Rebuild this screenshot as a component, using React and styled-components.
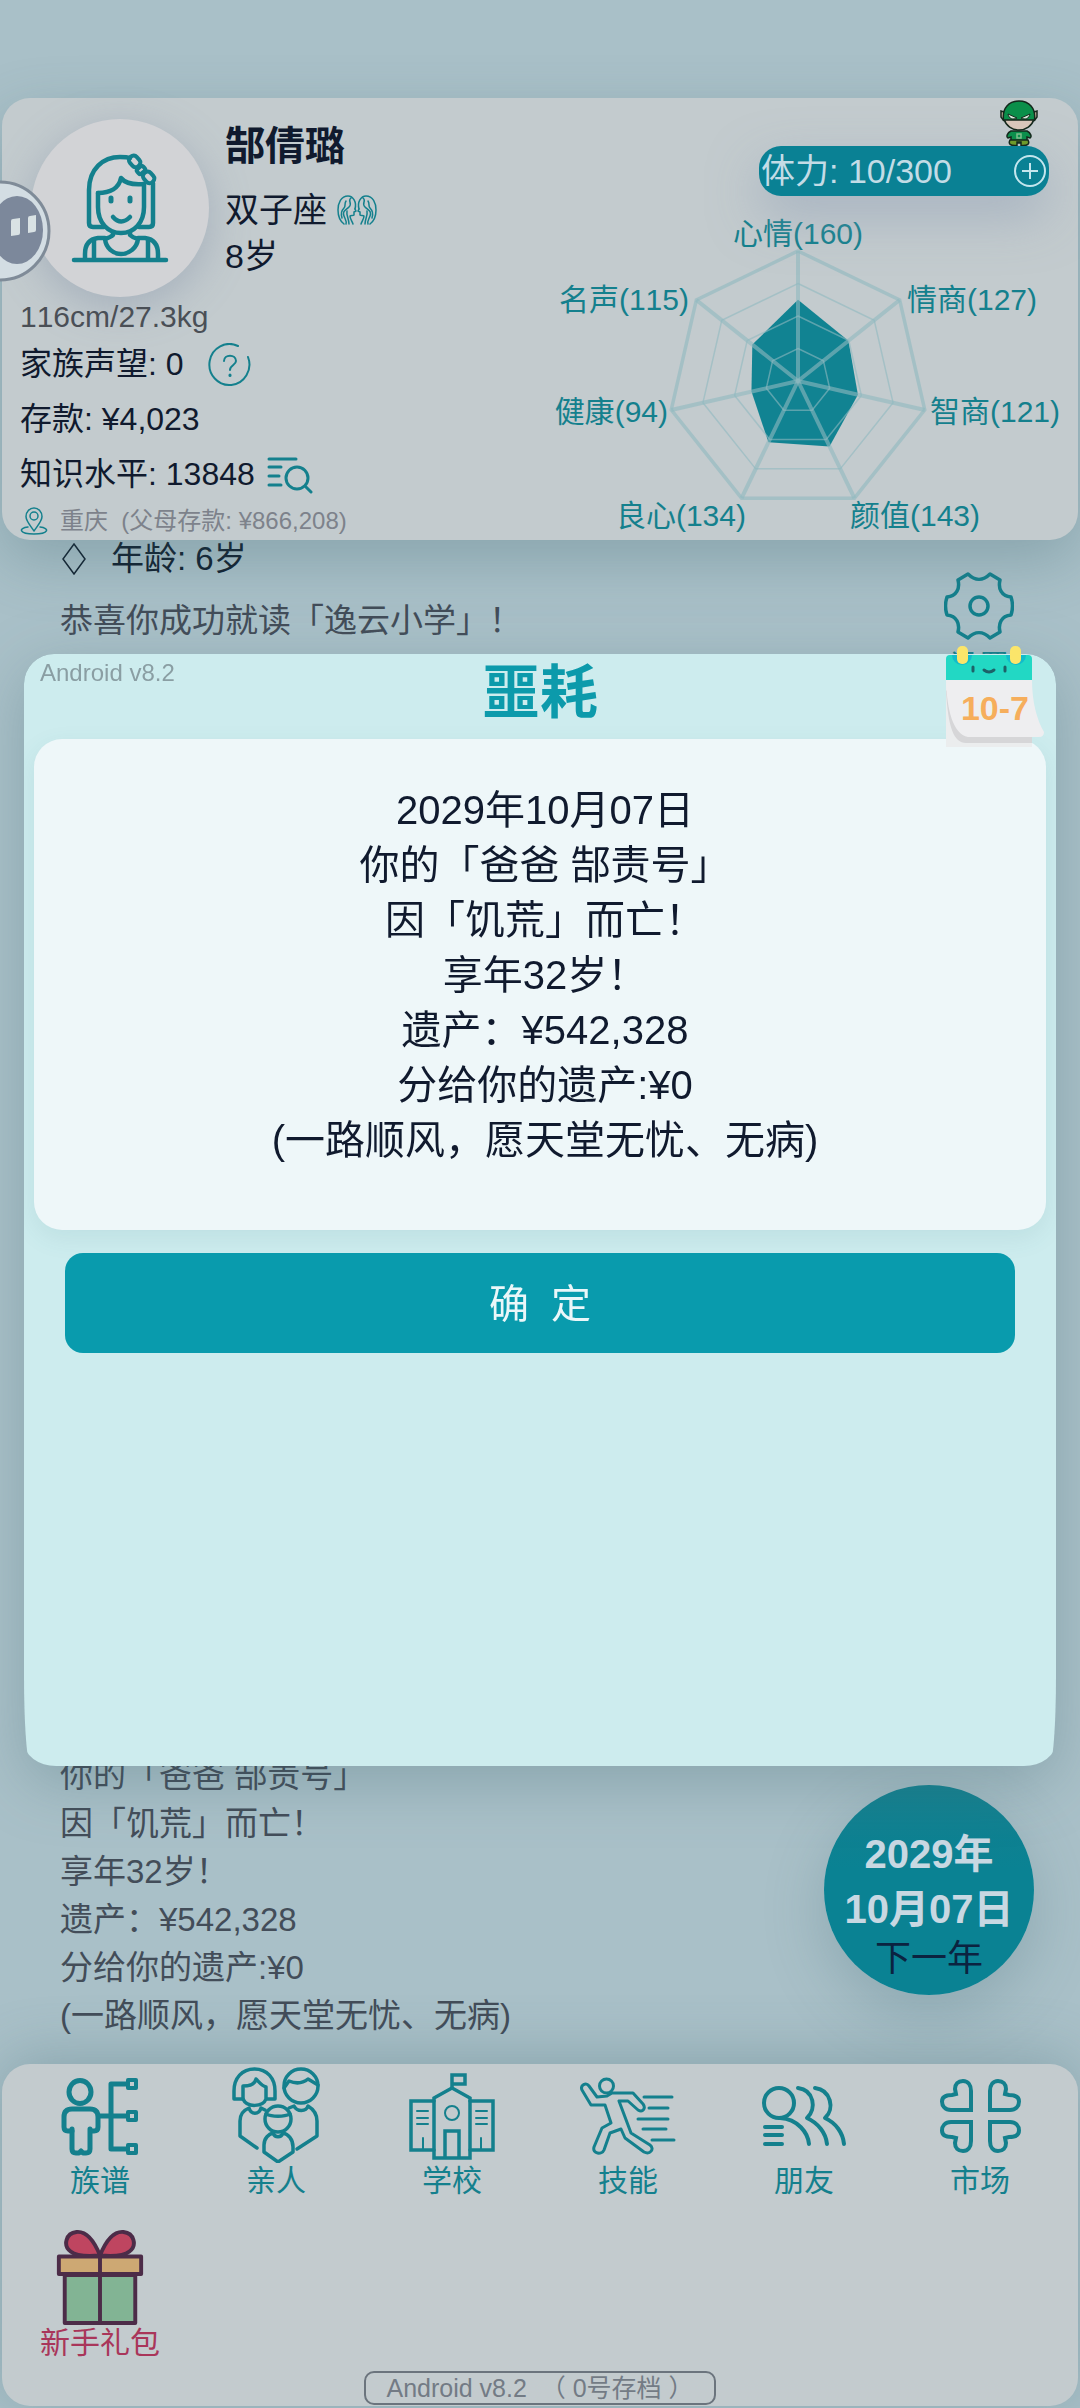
import styled, { createGlobalStyle } from "styled-components";

const GlobalStyle = createGlobalStyle`
  * {
    box-sizing: border-box;
  }
  body {
    margin: 0;
    background: #a9c0c8;
    font-family: "Liberation Sans", "Noto Sans CJK SC", sans-serif;
    font-kerning: none;
    color: #101a2e;
  }
  button {
    padding: 0;
    border: none;
    background: none;
    font-family: inherit;
    color: inherit;
    cursor: pointer;
  }
  svg {
    display: block;
  }
`;

const Page = styled.div`
  position: relative;
  min-height: 100vh;
  padding-top: 98px;
  display: flex;
  flex-direction: column;
  overflow: hidden;
`;

const Header = styled.header`
  position: relative;
  z-index: 1;
  margin: 0 2px;
  padding-right: 12px;
  display: grid;
  grid-template-columns: 1fr 516px;
  background: #c3cbce;
  border-radius: 28px;
  box-shadow: 0 20px 60px rgba(60, 100, 110, 0.3);
`;

const ProfileColumn = styled.div`
  padding: 21px 0 0 18px;
`;

const Profile = styled.div`
  display: flex;
  gap: 16px;
  padding-left: 11px;
`;

const Avatar = styled.div`
  width: 178px;
  height: 178px;
  border-radius: 50%;
  background: #d2d3d6;
  display: flex;
  align-items: center;
  justify-content: center;
  box-shadow: 0 10px 40px rgba(120, 135, 160, 0.4);
`;

const Name = styled.h1`
  margin: 0 0 14px;
  font-size: 40px;
  line-height: 54px;
`;

const ProfileLine = styled.div`
  display: flex;
  align-items: center;
  gap: 10px;
  font-size: 34px;
  line-height: 46px;
`;

const Body = styled.div`
  font-size: 30px;
  line-height: 40px;
  color: #4a4f56;
`;

const Stat = styled.div`
  display: flex;
  align-items: center;
  gap: ${(props) => props.$gap || "0"};
  font-size: 32px;
  line-height: 55px;
`;

const Location = styled.div`
  display: flex;
  align-items: center;
  gap: 12px;
  font-size: 24px;
  line-height: 38px;
  color: #7d828b;
  white-space: pre;
`;

const ChartColumn = styled.div`
  padding-top: 48px;
  display: flex;
  flex-direction: column;
  align-items: flex-end;
  gap: 14px;
`;

const Stamina = styled.div`
  position: relative;
  width: 290px;
  height: 50px;
  margin-right: 17px;
  padding: 0 2px;
  display: flex;
  align-items: center;
  justify-content: space-between;
  border-radius: 22px;
  background: #0a8194;
  color: #c3dce6;
  font-size: 34px;
  line-height: 50px;
  box-shadow: 0 20px 50px rgba(140, 155, 180, 0.5);
`;

const Mascot = styled.svg`
  position: absolute;
  right: 11px;
  bottom: 50px;
`;

const ChartLabel = styled.text`
  font-size: 30px;
  fill: #14808d;
`;

const Log = styled.main`
  flex: 1;
  padding: 0 46px 0 60px;
  display: flex;
  justify-content: space-between;
`;

const LogColumn = styled.div`
  display: flex;
  flex-direction: column;
  justify-content: space-between;
  padding-bottom: 24px;
  font-size: 33px;
  line-height: 48px;
  color: #434d59;
`;

const LogHeading = styled.div`
  display: flex;
  align-items: center;
  gap: 22px;
  margin-bottom: 19px;
  line-height: 38px;
  color: #10202f;
`;

const Side = styled.div`
  display: flex;
  flex-direction: column;
  justify-content: space-between;
  align-items: flex-end;
  padding: 32px 0 69px;
`;

const SettingsButton = styled.button`
  margin-right: 20px;
  display: flex;
  flex-direction: column;
  align-items: center;
  gap: 6px;
  font-size: 30px;
  line-height: 40px;
  color: #14808d;
`;

const YearButton = styled.button`
  width: 210px;
  height: 210px;
  border-radius: 50%;
  background: linear-gradient(#15808f, #0a8293 40%);
  box-shadow: 0 20px 60px rgba(60, 100, 110, 0.25);
  padding-top: 28px;
  font-size: 36px;
  line-height: 44px;
  color: #0b2340;
`;

const YearDate = styled.strong`
  display: block;
  font-size: 40px;
  line-height: 55px;
  color: #c8d8e2;
`;

const Nav = styled.nav`
  position: relative;
  margin: 0 2px 2px;
  padding: 3px 10px 1px;
  border-radius: 28px;
  background: #c3cbce;
  box-shadow: 0 -6px 60px rgba(60, 100, 110, 0.3);
`;

const NavGrid = styled.div`
  display: grid;
  grid-template-columns: repeat(6, 1fr);
  row-gap: 30px;
`;

const NavButton = styled.button`
  display: flex;
  flex-direction: column;
  align-items: center;
  font-size: 30px;
  line-height: 36px;
  color: ${(props) => (props.$hot ? "#a9365a" : "#14808d")};
`;

const SaveSlot = styled.button`
  display: block;
  margin: 10px auto 0;
  padding: 0 20px;
  border: 2px solid #6b747d;
  border-radius: 10px;
  font-size: 25px;
  line-height: 30px;
  color: #737b85;
  white-space: pre;
`;

const Overlay = styled.div`
  position: absolute;
  inset: 0;
  z-index: 2;
  padding: 12px 24px 0;
  display: flex;
  align-items: center;
`;

const ModalFrame = styled.div`
  position: relative;
  width: 100%;
`;

/* two nested radii give the sheet its tapered lower corners */
const ModalClip = styled.div`
  overflow: hidden;
  border-radius: 30px 30px 7px 7px / 30px 30px 90px 90px;
  filter: drop-shadow(0 16px 30px rgba(60, 100, 110, 0.3));
`;

const Modal = styled.section`
  min-height: 1112px;
  padding: 0 10px;
  border-radius: 30px 30px 32px 32px / 30px 30px 24px 24px;
  background: #cdecee;
`;

const ModalHead = styled.div`
  display: grid;
  grid-template-columns: 1fr auto 1fr;
  align-items: start;
  height: 85px;
`;

const Version = styled.span`
  padding: 4px 0 0 6px;
  font-size: 24px;
  line-height: 30px;
  color: #8a9ea3;
`;

const ModalTitle = styled.h2`
  margin: 0;
  font-size: 58px;
  line-height: 78px;
  color: #0c9aab;
`;

const Notice = styled.div`
  padding: 44px 0 62px 10px;
  border-radius: 28px;
  background: #eef7f9;
  box-shadow: 0 8px 24px rgba(60, 120, 130, 0.1);
  font-size: 40px;
  line-height: 55px;
  text-align: center;
`;

const ConfirmButton = styled.button`
  display: block;
  width: calc(100% - 62px);
  height: 100px;
  margin: 23px auto 0;
  padding-bottom: 4px;
  border-radius: 18px;
  background: #099bad;
  color: #eaf7f9;
  font-size: 40px;
  white-space: pre;
`;

const Calendar = styled.div`
  position: absolute;
  top: -8px;
  right: 12px;
  width: 98px;
  height: 101px;
`;

const CalendarDate = styled.strong`
  position: absolute;
  top: 42px;
  right: 15px;
  font-size: 34px;
  line-height: 40px;
  color: #f6ae5c;
`;

const Bubble = styled.button`
  position: absolute;
  z-index: 1;
  left: 0;
  top: 180px;
`;

const stats = [
  { name: "心情", value: 160, x: 248, y: 34, anchor: "middle" },
  { name: "情商", value: 127, x: 357, y: 100, anchor: "start" },
  { name: "智商", value: 121, x: 380, y: 212, anchor: "start" },
  { name: "颜值", value: 143, x: 300, y: 316, anchor: "start" },
  { name: "良心", value: 134, x: 196, y: 316, anchor: "end" },
  { name: "健康", value: 94, x: 118, y: 212, anchor: "end" },
  { name: "名声", value: 115, x: 139, y: 100, anchor: "end" },
];

const MAX = 256;
const RADIUS = 130;
const CX = 248;
const CY = 171;

const point = (i, ratio) => {
  const angle = (i * 2 * Math.PI) / stats.length;
  return [
    CX + Math.sin(angle) * RADIUS * ratio,
    CY - Math.cos(angle) * RADIUS * ratio,
  ];
};

const ring = (ratio) => stats.map((_, i) => point(i, ratio)).join(" ");

const RadarChart = () => (
  <svg width="516" height="330" viewBox="0 0 516 330">
    <polygon
      points={stats.map((s, i) => point(i, s.value / MAX)).join(" ")}
      fill="#118392"
    />
    <g fill="none" stroke="#8fb9c0" strokeOpacity="0.6">
      {[0.25, 0.5, 0.75].map((r) => (
        <polygon key={r} points={ring(r)} strokeWidth="1.5" />
      ))}
      <polygon points={ring(1)} strokeWidth="3.5" />
      {stats.map((s, i) => {
        const [x, y] = point(i, 1);
        return (
          <line key={s.name} x1={CX} y1={CY} x2={x} y2={y} strokeWidth="4" />
        );
      })}
    </g>
    {stats.map((s) => (
      <ChartLabel key={s.name} x={s.x} y={s.y} textAnchor={s.anchor}>
        {s.name}({s.value})
      </ChartLabel>
    ))}
  </svg>
);

const line = {
  fill: "none",
  stroke: "#14808d",
  strokeLinecap: "round",
  strokeLinejoin: "round",
};

const GirlIcon = () => (
  <svg width="98" height="112" viewBox="0 0 98 112" {...line} strokeWidth="4.5">
    <path d="M3 108H95" />
    <path d="M33 75H22q-4 0-4-4V38C18 17 32 5 49 5c3 0 7 0 10 1" />
    <path d="M82 31V71q0 4-4 4H68" />
    <path d="M27 41V55C27 71 37 81 50 81S73 71 73 55V32" />
    <path d="M27 41C39 41 48 36 50 26C54 31 62 33 73 32" />
    <path d="M40 46v3M59 46v3" strokeWidth="5" />
    <path d="M42 65Q50 74 59 65" />
    <path d="M42 80v3c-2 2-5 3-8 4c1 9 8 15 16 15s16-6 17-15c-4-1-6-2-8-4v-3" />
    <path d="M14 107V102C14 92 19 87 27 86L34 86M67 86L74 86C82 87 87 92 87 102V107" />
    <path d="M23 88V107M77 88V107" />
    <g strokeWidth="4">
      <rect x="58" y="5" width="12" height="9" rx="4" transform="rotate(48 64 9)" />
      <rect x="67" y="14" width="6" height="8" rx="2" transform="rotate(48 70 18)" />
      <rect x="72" y="21" width="12" height="9" rx="4" transform="rotate(48 78 25)" />
    </g>
  </svg>
);

const GeminiIcon = () => (
  <svg width="40" height="32" viewBox="0 0 40 32" {...line} strokeWidth="1.5">
    {["", "translate(40 0) scale(-1 1)"].map((t) => (
      <g key={t} transform={t}>
        <path d="M18 15C20 8 16 2 11 2C4 2 1 9 1 16C1 22 3 27 7 30" />
        <path d="M18 15L19 17L17 18V21C16 22 14 21 13 22C13 25 15 27 16 30" />
        <path d="M14 4C10 7 16 9 12 13C9 16 5 17 7 22C8 25 10 27 9 30" />
        <path d="M9 7C7 10 9 12 7 14C4 17 4 21 5 24M10 17C9 21 12 25 12 30" />
      </g>
    ))}
  </svg>
);

const HelpIcon = () => (
  <svg width="44" height="44" viewBox="0 0 44 44" {...line} strokeWidth="2">
    <path d="M30 3A20 20.5 0 1 0 40 14" />
    <path d="M16 18C16 11 28 11 28 18C28 22 22 22 22 27" />
    <path d="M22 32v.5" strokeWidth="3" />
  </svg>
);

const ListSearchIcon = () => (
  <svg width="46" height="38" viewBox="0 0 46 38" {...line} strokeWidth="3">
    <path d="M2 3H29M2 11H14M2 20H12M2 29H14M39 31L44 36" />
    <circle cx="30" cy="22" r="11" />
  </svg>
);

const PinIcon = () => (
  <svg width="28" height="28" viewBox="0 0 28 28" {...line} strokeWidth="1.5">
    <path d="M14 24C10 18 6 14 6 9.500A8 8.500 0 0 1 22 9.500C22 14 18 18 14 24Z" />
    <circle cx="14" cy="9" r="4" />
    <path d="M8 20C-2 21-1 27 14 27S30 21 20 20" />
  </svg>
);

const PlusIcon = () => (
  <svg width="34" height="34" viewBox="0 0 34 34" fill="none" stroke="#c3e6ee" strokeWidth="2">
    <circle cx="17" cy="17" r="15" />
    <path d="M17 9V25M9 17H25" />
  </svg>
);

const MascotIcon = () => (
  <Mascot width="38" height="46" viewBox="0 0 38 46" stroke="#14281c" strokeWidth="1.500">
    <path d="M4 12L1 11V17L4 21M34 12L37 11V17L34 21" fill="#cbb3a0" />
    <path d="M11 31C7 33 6 37 8 38L11 37V43H27V37L30 38C32 37 31 33 27 31Z" fill="#0c8f4c" />
    <path d="M10 40C8 44 10 46 17 45.500V42H21V45.500C28 46 30 44 28 40Z" fill="#6e9a2c" />
    <path d="M17 34h4v4h-4z" fill="none" stroke="#7fbf8c" />
    <path d="M4 19C6 26 12 30 19 30S32 26 34 19Z" fill="#d9c6ba" />
    <path d="M3.500 20C2 8 9 1 19 1S36 8 34.500 20Z" fill="#0a8f4a" />
    <path d="M8 14L17 18C13 20 9 19 8 14ZM30 14L21 18C25 20 29 19 30 14Z" fill="#d8eadb" strokeWidth="1" />
  </Mascot>
);

const GearIcon = () => (
  <svg width="70" height="68" viewBox="0 0 70 68" {...line} strokeWidth="3.500">
    <path d="M24 2L14 8C16 16 13 24 3 25C1 31 1 37 3 43C13 44 16 52 14 60L24 66C31 59 39 59 46 66L56 60C54 52 57 44 67 43C69 37 69 31 67 25C57 24 54 16 56 8L46 2C39 9 31 9 24 2Z" />
    <circle cx="35" cy="34" r="9" />
  </svg>
);

const FamilyTreeIcon = () => (
  <svg width="96" height="96" viewBox="0 0 96 96" {...line} strokeWidth="5">
    <ellipse cx="28" cy="25" rx="11" ry="11.500" />
    <path d="M20 64H16q-4 0-4-4V50q0-8 8-8H38q8 0 8 8V60q0 4-4 4H39" />
    <path d="M20 62V82q0 4 4 4h3l2-2l2 2h3q4 0 4-4V62" />
    <path d="M47 49H75M75 17H59V82H75" />
    <path d="M76 13h8v8h-8zM76 45h8v8h-8zM76 78h8v8h-8z" strokeWidth="4" />
  </svg>
);

const RelativesIcon = () => (
  <svg width="96" height="96" viewBox="0 0 96 96" {...line} strokeWidth="3.500">
    <path d="M15 32H6V24C6 11 14 2 26.500 2S47 11 47 24V32H39" />
    <path d="M15 32V19C22 19 27 17 28 12C31 15 34 19 38 20V32C35 40 19 41 15 32Z" />
    <ellipse cx="73" cy="19" rx="17" ry="17" />
    <path d="M56 21L61 14C68 17 75 16 80 12L90 18" />
    <circle cx="50" cy="52" r="13" />
    <path d="M38 47C44 50 56 50 62 47" />
    <path d="M50 95L36 85V78C36 71 41 67 45 66C47 71 53 71 55 66C60 67 65 72 65 80V85Z" />
    <path d="M29 81L12 69V54C12 47 16 43 21 41C23 48 31 48 33 41L37 43" />
    <path d="M69 82L89 69V54C89 46 85 42 80 39C78 45 69 45 66 39L61 41" />
  </svg>
);

const SchoolIcon = () => (
  <svg width="96" height="96" viewBox="0 0 96 96" {...line} strokeWidth="3.500" strokeLinejoin="miter">
    <path d="M30 91V31L48 21L66 31V91Z" />
    <path d="M48 21V8H61V17H48" />
    <path d="M30 34H7V83H30M66 34H89V83H66" />
    <path d="M41 90V64H55V90" />
    <g strokeWidth="2">
      <circle cx="48" cy="46" r="7" />
      <path d="M13 44H24M13 51H24M13 57H24M72 44H83M72 51H83M72 57H83M19 71V83M77 71V83" />
    </g>
  </svg>
);

const SkillIcon = () => (
  <svg width="96" height="96" viewBox="0 0 96 96" {...line} strokeWidth="3">
    <circle cx="26.500" cy="19" r="7" />
    <path d="M2 23L11 38H25L31 56L22 61L14 80C12 87 22 88 24 83L30 66L41 62L45 71L64 85C70 88 75 82 70 78L51 66L39 34H48L58 43C63 46 66 41 63 37L53 26H32L27 29L17 30L9 19C6 15 0 18 2 23Z" />
    <path d="M64 30H92M69 41H88M58 52H88M63 62H86M72 73H94" />
  </svg>
);

const FriendsIcon = () => (
  <svg width="96" height="96" viewBox="0 0 96 96" {...line} strokeWidth="4">
    <circle cx="23" cy="36" r="15" />
    <path d="M24 51C42 52 52 66 53 77" />
    <path d="M42 21C58 23 61 42 51 51C62 56 70 66 71 77" />
    <path d="M59 21C75 23 79 42 69 51C80 56 87 66 88 77" />
    <path d="M9 60H26M9 68H26M9 77H26" />
  </svg>
);

const heart =
  "M39 43H19C13 43 10 39 10 34.500S14 28 20 28L24 27L23 22C23 17 26 14 31 14S39 18 39 24Z";

const MarketIcon = () => (
  <svg width="96" height="96" viewBox="0 0 96 96" {...line} strokeWidth="4" strokeLinejoin="miter">
    <path d={heart} />
    <path d={heart} transform="translate(97 0) scale(-1 1)" />
    <path d={heart} transform="translate(0 98) scale(1 -1)" />
    <path d={heart} transform="translate(97 98) scale(-1 -1)" />
  </svg>
);

const GiftIcon = () => (
  <svg width="96" height="96" viewBox="0 0 96 98" stroke="#4c2c48" strokeWidth="4" strokeLinejoin="round">
    <path d="M48 27C42 12 34 2 24 3C13 4 10 17 18 23C24 28 36 28 48 27Z" fill="#bf4560" />
    <path d="M48 27C54 12 62 2 72 3C83 4 86 17 78 23C72 28 60 28 48 27Z" fill="#bf4560" />
    <path d="M12 47H84V96H12Z" fill="#82b494" />
    <path d="M6 28H90V46H6Z" fill="#cda873" />
    <path d="M48 26V96" />
  </svg>
);

const CalendarIcon = () => (
  <svg width="98" height="101" viewBox="0 0 98 101">
    <path d="M0 30H86V101H0Z" fill="#ebedee" />
    <path d="M0 44C2 82 8 97 20 97H86V90L40 84Z" fill="#d6d6d8" />
    <path d="M0 34H86C86 56 91 74 98 86q0 5-5 5H22C7 88 1 64 0 34Z" fill="#eeeef0" />
    <path d="M4 9H82q4 0 4 4V34H0V13q0-4 4-4Z" fill="#22d8c4" />
    <path d="M6 9A10 10 0 1 0 26 9ZM60 9A10 10 0 1 0 80 9Z" fill="#12bccb" />
    <rect x="11" width="11" height="18" rx="5" fill="#fbe56a" />
    <rect x="64" width="11" height="18" rx="5" fill="#fbe56a" />
    <g {...line} stroke="#1d6268" strokeWidth="3">
      <path d="M27 21V25M59 21V25M38 24Q43 28 48 24" />
    </g>
  </svg>
);

const BubbleIcon = () => (
  <svg width="52" height="104" viewBox="0 0 52 104">
    <circle cx="0" cy="51" r="49" fill="#d3dde3" stroke="#7f8b98" strokeWidth="3" />
    <ellipse cx="17" cy="50" rx="26" ry="34" fill="#7c889b" />
    <path d="M11 41Q11 39 13 39L20 38V53Q20 55 18 55L11 56ZM28 38Q28 36 30 36L36 35V50Q36 52 34 52L28 53Z" fill="#d9e2e4" />
  </svg>
);

const navItems = [
  { label: "族谱", Icon: FamilyTreeIcon },
  { label: "亲人", Icon: RelativesIcon },
  { label: "学校", Icon: SchoolIcon },
  { label: "技能", Icon: SkillIcon },
  { label: "朋友", Icon: FriendsIcon },
  { label: "市场", Icon: MarketIcon },
  { label: "新手礼包", Icon: GiftIcon, hot: true },
];

const news = [
  "2029年10月07日",
  "你的「爸爸 郜责号」",
  "因「饥荒」而亡！",
  "享年32岁！",
  "遗产：¥542,328",
  "分给你的遗产:¥0",
  "(一路顺风，愿天堂无忧、无病)",
];

const App = () => {
  return (
    <Page lang="zh-CN">
      <GlobalStyle />
      <Header>
        <ProfileColumn>
          <Profile>
            <Avatar>
              <GirlIcon />
            </Avatar>
            <div>
              <Name>郜倩璐</Name>
              <ProfileLine>
                双子座 <GeminiIcon />
              </ProfileLine>
              <ProfileLine>8岁</ProfileLine>
            </div>
          </Profile>
          <Body>116cm/27.3kg</Body>
          <Stat $gap="24px">
            家族声望: 0
            <button aria-label="帮助">
              <HelpIcon />
            </button>
          </Stat>
          <Stat>存款: ¥4,023</Stat>
          <Stat $gap="12px">
            知识水平: 13848
            <button aria-label="查看">
              <ListSearchIcon />
            </button>
          </Stat>
          <Location>
            <PinIcon />
            {"重庆  (父母存款: ¥866,208)"}
          </Location>
        </ProfileColumn>
        <ChartColumn>
          <Stamina>
            体力: 10/300
            <button aria-label="增加体力">
              <PlusIcon />
            </button>
            <MascotIcon />
          </Stamina>
          <RadarChart />
        </ChartColumn>
      </Header>

      <Log>
        <LogColumn>
          <div>
            <LogHeading>
              <svg width="29" height="32" viewBox="0 0 29 32" fill="none" stroke="#10202f" strokeWidth="1.500">
                <path d="M14 1L25 16L14 31L3 16Z" />
              </svg>
              年龄: 6岁
            </LogHeading>
            <div>恭喜你成功就读「逸云小学」！</div>
          </div>
          <div>
            {news.map((text) => (
              <div key={text}>{text}</div>
            ))}
          </div>
        </LogColumn>
        <Side>
          <SettingsButton>
            <GearIcon />
            设置
          </SettingsButton>
          <YearButton>
            <YearDate>2029年</YearDate>
            <YearDate>10月07日</YearDate>
            下一年
          </YearButton>
        </Side>
      </Log>

      <Nav>
        <NavGrid>
          {navItems.map(({ label, Icon, hot }) => (
            <NavButton key={label} $hot={hot}>
              <Icon />
              {label}
            </NavButton>
          ))}
        </NavGrid>
        <SaveSlot>{"Android v8.2\u00a0\u00a0（\u00a00号存档\u00a0）"}</SaveSlot>
      </Nav>

      <Bubble aria-label="助手">
        <BubbleIcon />
      </Bubble>

      <Overlay>
        <ModalFrame role="dialog" aria-labelledby="notice-title">
          <ModalClip>
            <Modal>
              <ModalHead>
                <Version>Android v8.2</Version>
                <ModalTitle id="notice-title">噩耗</ModalTitle>
              </ModalHead>
              <Notice>
                {news.map((text) => (
                  <div key={text}>{text}</div>
                ))}
              </Notice>
              <ConfirmButton>{"确\u00a0\u00a0定"}</ConfirmButton>
            </Modal>
          </ModalClip>
          <Calendar>
            <CalendarIcon />
            <CalendarDate>10-7</CalendarDate>
          </Calendar>
        </ModalFrame>
      </Overlay>
    </Page>
  );
};

export default App;
